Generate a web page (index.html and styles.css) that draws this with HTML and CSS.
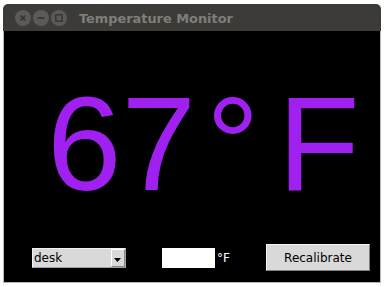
FILE: index.html
```html
<!DOCTYPE html>
<html>
<head>
<meta charset="utf-8">
<link rel="stylesheet" href="styles.css">
</head>
<body>
<div class="window">
  <div class="titlebar">
    <div class="controls">
      <svg class="wbtn" width="16" height="16" viewBox="0 0 16 16"><circle cx="8" cy="8" r="8" fill="#5b5a56"/><path d="M5.5 5.5 L10.5 10.5 M10.5 5.5 L5.5 10.5" stroke="#34332f" stroke-width="1.6"/></svg>
      <svg class="wbtn" width="16" height="16" viewBox="0 0 16 16"><circle cx="8" cy="8" r="8" fill="#5b5a56"/><path d="M4.5 8 H11.5" stroke="#34332f" stroke-width="1.6"/></svg>
      <svg class="wbtn" width="16" height="16" viewBox="0 0 16 16"><circle cx="8" cy="8" r="8" fill="#5b5a56"/><rect x="4.8" y="4.8" width="6.4" height="6.4" fill="none" stroke="#34332f" stroke-width="1.4"/></svg>
    </div>
    <div class="title">Temperature Monitor</div>
  </div>
  <div class="content">
    <div class="reading"><span>67</span><span class="deg">°</span><span>F</span></div>
    <div class="row">
      <div class="combo"><span class="combo-text">desk</span><span class="combo-btn"><svg width="8" height="5" viewBox="0 0 8 5"><path d="M0 0 H7 L3.5 4 Z" fill="#000"/></svg></span></div>
      <div class="entry"></div>
      <span class="unit">°F</span>
      <div class="button">Recalibrate</div>
    </div>
  </div>
</div>
</body>
</html>
```
FILE: styles.css
```css
html, body {
  margin: 0;
  padding: 0;
  background: #ffffff;
}
.window {
  margin: 4px 0 0 3px;
  width: 378px;
}
.titlebar {
  height: 27px;
  background: #3c3b37;
  border-radius: 5px 5px 0 0;
  display: flex;
  align-items: center;
}
.controls {
  display: flex;
  gap: 2px;
  margin-left: 12px;
}
.wbtn {
  display: block;
}
.title {
  margin-left: 12px;
  font-family: "DejaVu Sans", sans-serif;
  font-weight: bold;
  font-size: 12.9px;
  color: #7f7e79;
  margin-top: 1px;
}
.content {
  height: 251px;
  background: #000;
  border: 1px solid #b8b8b8;
  border-top: none;
  display: flex;
  flex-direction: column;
  box-sizing: content-box;
  width: 376px;
}
.reading {
  margin-top: 46px;
  font-family: "Liberation Sans", Arial, sans-serif;
  font-size: 134px;
  line-height: 1;
  color: #a020f0;
  padding-left: 43px;
  white-space: nowrap;
}
.deg {
  margin-left: 10px;
  margin-right: 18px;
}
.row {
  margin-top: auto;
  margin-bottom: 11px;
  display: flex;
  align-items: center;
  height: 27px;
  padding-left: 28px;
  padding-right: 10px;
  font-family: "DejaVu Sans", sans-serif;
  font-size: 12px;
}
.combo {
  width: 94px;
  height: 20px;
  box-sizing: border-box;
  border: 1px solid #f0f0f0;
  border-right-color: #a0a0a0;
  border-bottom-color: #a0a0a0;
  background: #d9d9d9;
  display: flex;
  align-items: center;
}
.combo-text {
  flex: 1;
  padding-left: 1px;
  color: #000;
}
.combo-btn {
  width: 14px;
  height: 18px;
  box-sizing: border-box;
  border: 1px solid #ffffff;
  border-right-color: #8a8a8a;
  border-bottom-color: #8a8a8a;
  background: #d9d9d9;
  display: flex;
  align-items: center;
  justify-content: center;
  padding-top: 6px;
}
.combo-btn svg {
  display: block;
}
.entry {
  margin-left: 36px;
  width: 53px;
  height: 20px;
  box-sizing: border-box;
  background: #fff;
}
.unit {
  margin-left: 2px;
  color: #fff;
}
.button {
  margin-left: auto;
  width: 104px;
  height: 27px;
  box-sizing: border-box;
  border: 1px solid #f4f4f4;
  border-right-color: #808080;
  border-bottom-color: #808080;
  background: #d9d9d9;
  color: #000;
  display: flex;
  align-items: center;
  justify-content: center;
}
```
